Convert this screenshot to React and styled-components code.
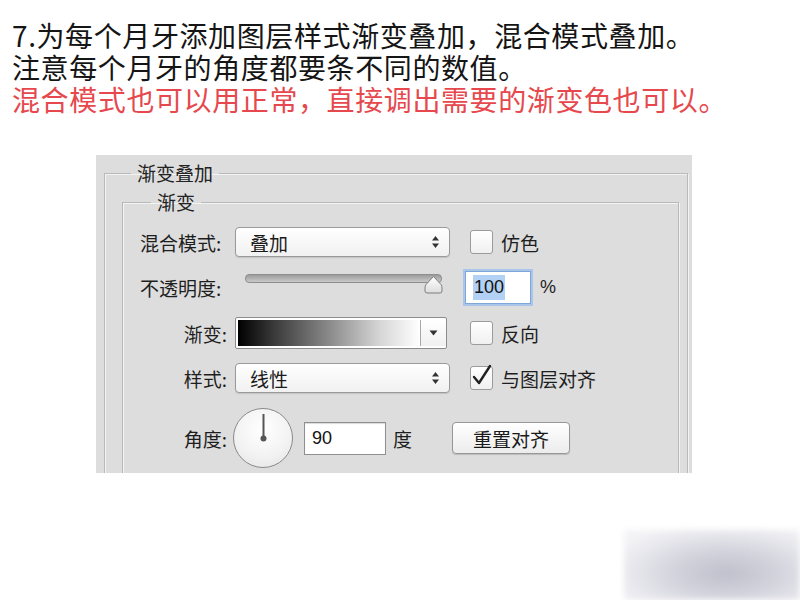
import React from "react";
import styled, { createGlobalStyle } from "styled-components";

const Global = createGlobalStyle`
  html, body { margin: 0; padding: 0; background: #fff; }
  body { width: 800px; height: 600px; overflow: hidden; position: relative;
    font-family: "Noto Sans CJK SC", "Noto Sans", sans-serif; }
`;

const Page = styled.div`
  width: 800px;
  height: 600px;
  position: relative;
  overflow: hidden;
`;

const Intro = styled.div`
  padding: 19px 0 0 12px;
`;

const Line = styled.div`
  font-family: "Noto Sans CJK SC", sans-serif;
  font-size: 28px;
  line-height: 32px;
  height: 32px;
  letter-spacing: 0.6px;
  white-space: nowrap;
  color: ${(p) => (p.$red ? "#e6484d" : "#151515")};
`;

const Panel = styled.div`
  margin: 40px 0 0 96px;
  width: 596px;
  height: 318px;
  background: #dddddd;
  overflow: hidden;
  box-sizing: border-box;
  padding: 5px 4px 0 8px;
`;

const Group = styled.fieldset`
  margin: ${(p) => (p.$inner ? "3px 0 0 0" : "0")};
  padding: ${(p) => (p.$inner ? "12px 0 40px 0" : "0 8px 40px 17px")};
  border: 1px solid #b9b9b9;
  box-shadow: inset 1px 1px 0 #f3f3f3, 1px 1px 0 #f3f3f3;
  min-width: 0;
`;

const Legend = styled.legend`
  margin-left: ${(p) => p.$offset}px;
  padding: 0 6px;
  font-size: 19px;
  line-height: 26px;
  color: #222;
`;

const Rows = styled.div`
  display: flex;
  flex-direction: column;
  gap: 13px;
`;

const Row = styled.div`
  display: flex;
  align-items: center;
  height: ${(p) => p.$h}px;
`;

const Label = styled.div`
  width: 104px;
  padding-right: 8px;
  box-sizing: content-box;
  text-align: right;
  font-size: 19px;
  color: #1e1e1e;
  white-space: nowrap;
`;

const LabelLeft = styled(Label)`
  text-align: left;
  padding-left: 17px;
  width: 87px;
`;

const Select = styled.div`
  width: 215px;
  height: 30px;
  box-sizing: border-box;
  border: 1px solid #9a9a9a;
  border-radius: 4px;
  background: linear-gradient(#ffffff, #f1f1f1);
  box-shadow: 0 1px 1px rgba(0,0,0,0.12);
  display: flex;
  align-items: center;
  justify-content: space-between;
  padding: 0 9px 0 14px;
  font-size: 19px;
  color: #1a1a1a;
`;

const Check = styled.div`
  width: 23px;
  height: 24px;
  box-sizing: border-box;
  border: 1px solid #9b9b9b;
  border-radius: 3px;
  background: linear-gradient(#ffffff, #f0f0f0);
  margin-left: ${(p) => p.$ml ?? 20}px;
  position: relative;
  flex: none;
`;

const CheckText = styled.span`
  margin-left: 8px;
  font-size: 19px;
  color: #1e1e1e;
  white-space: nowrap;
`;

const SliderBox = styled.div`
  width: 215px;
  height: 34px;
  position: relative;
  align-self: stretch;
`;

const Track = styled.div`
  position: absolute;
  left: 10px;
  right: 8px;
  top: 4px;
  height: 7px;
  border-radius: 4px;
  border: 1px solid #8e8e8e;
  background: linear-gradient(#9c9c9c, #c9c9c9);
`;

const Thumb = styled.svg`
  position: absolute;
  right: 7px;
  top: 5px;
`;

const Field = styled.div`
  width: ${(p) => p.$w}px;
  height: 33px;
  box-sizing: border-box;
  margin-left: ${(p) => p.$ml}px;
  border: 1px solid ${(p) => (p.$focus ? "#7ea6d8" : "#8f8f8f")};
  box-shadow: ${(p) => (p.$focus ? "0 0 0 2px #a9c6ea" : "inset 0 1px 1px rgba(0,0,0,0.15)")};
  background: #fff;
  display: flex;
  align-items: center;
  padding-left: 7px;
  font-family: "Liberation Sans", Arial, sans-serif;
  font-size: 18px;
  color: #111;
`;

const Selected = styled.span`
  background: #b3d1f4;
  padding: 2px 1px;
`;

const Unit = styled.span`
  margin-left: ${(p) => p.$ml}px;
  font-size: ${(p) => (p.$latin ? 18 : 19)}px;
  font-family: ${(p) => (p.$latin ? '"Liberation Sans", Arial, sans-serif' : '"Noto Sans CJK SC", sans-serif')};
  color: #1e1e1e;
`;

const GradientPick = styled.div`
  width: 212px;
  height: 32px;
  box-sizing: border-box;
  border: 1px solid #8c8c8c;
  border-radius: 2px;
  background: #fff;
  display: flex;
  padding: 2px 0 2px 2px;
`;

const GradientFill = styled.div`
  flex: 1;
  background: linear-gradient(to right, #000 0%, #3a3a3a 20%, #8a8a8a 50%, #d6d6d6 78%, #ffffff 100%);
`;

const GradientArrow = styled.div`
  width: 25px;
  border-left: 1px solid #a8a8a8;
  display: flex;
  align-items: center;
  justify-content: center;
  background: linear-gradient(#fff, #f0f0f0);
`;

const Dial = styled.div`
  width: 60px;
  height: 60px;
  box-sizing: border-box;
  border-radius: 50%;
  border: 1px solid #8a8a8a;
  background: radial-gradient(circle at 50% 35%, #ffffff 0%, #f3f3f3 55%, #e2e2e2 100%);
  position: relative;
  flex: none;
  margin-left: -2px;
`;

const DialSvg = styled.svg`
  position: absolute;
  left: 0;
  top: 0;
`;

const Button = styled.div`
  margin-left: 40px;
  width: 118px;
  height: 32px;
  box-sizing: border-box;
  border: 1px solid #979797;
  border-radius: 4px;
  background: linear-gradient(#ffffff, #ececec);
  box-shadow: 0 1px 1px rgba(0,0,0,0.15);
  display: flex;
  align-items: center;
  justify-content: center;
  font-size: 19px;
  color: #1a1a1a;
`;

const Smudge = styled.div`
  position: absolute;
  right: 0;
  bottom: 0;
  width: 176px;
  height: 70px;
  background: radial-gradient(ellipse 70% 75% at 58% 62%, #c0c0cc 0%, #d2d2dc 40%, #e6e6ec 75%, #f3f3f6 100%);
  filter: blur(3px);
`;

const Stepper = () => (
  <svg width="9" height="14" viewBox="0 0 9 14">
    <path d="M4.5 1 L8 5.5 H1 Z" fill="#333" />
    <path d="M4.5 13 L8 8.5 H1 Z" fill="#333" />
  </svg>
);

export default function App() {
  return (
    <Page>
      <Global />
      <Intro>
        <Line>7.为每个月牙添加图层样式渐变叠加，混合模式叠加。</Line>
        <Line>注意每个月牙的角度都要条不同的数值。</Line>
        <Line $red>混合模式也可以用正常，直接调出需要的渐变色也可以。</Line>
      </Intro>
      <Panel>
        <Group>
          <Legend $offset={9}>渐变叠加</Legend>
          <Group $inner>
            <Legend $offset={28}>渐变</Legend>
            <Rows>
              <Row $h={30}>
                <LabelLeft>混合模式:</LabelLeft>
                <Select>
                  <span>叠加</span>
                  <Stepper />
                </Select>
                <Check />
                <CheckText>仿色</CheckText>
              </Row>
              <Row $h={34}>
                <LabelLeft>不透明度:</LabelLeft>
                <SliderBox>
                  <Track />
                  <Thumb width="19" height="19" viewBox="0 0 19 19">
                    <defs>
                      <linearGradient id="tg" x1="0" y1="0" x2="0" y2="1">
                        <stop offset="0" stopColor="#ffffff" />
                        <stop offset="1" stopColor="#dcdcdc" />
                      </linearGradient>
                    </defs>
                    <path
                      d="M9.5 1.5 L17 9.5 Q18 11 18 13 V16 Q18 18 16 18 H3 Q1 18 1 16 V13 Q1 11 2 9.5 Z"
                      fill="url(#tg)"
                      stroke="#7f7f7f"
                      strokeWidth="1"
                    />
                  </Thumb>
                </SliderBox>
                <Field $w={66} $ml={15} $focus>
                  <Selected>100</Selected>
                </Field>
                <Unit $ml={9} $latin>%</Unit>
              </Row>
              <Row $h={32}>
                <Label>渐变:</Label>
                <GradientPick>
                  <GradientFill />
                  <GradientArrow>
                    <svg width="9" height="6" viewBox="0 0 9 6">
                      <path d="M0.5 0.5 H8.5 L4.5 5.5 Z" fill="#333" />
                    </svg>
                  </GradientArrow>
                </GradientPick>
                <Check $ml={23} />
                <CheckText>反向</CheckText>
              </Row>
              <Row $h={32}>
                <Label>样式:</Label>
                <Select>
                  <span>线性</span>
                  <Stepper />
                </Select>
                <Check>
                  <svg width="23" height="24" viewBox="0 0 23 24" style={{ position: "absolute", left: -1, top: -3 }}>
                    <path d="M4 13 L9 19 L20 2" fill="none" stroke="#222" strokeWidth="2.4" strokeLinecap="round" strokeLinejoin="round" />
                  </svg>
                </Check>
                <CheckText>与图层对齐</CheckText>
              </Row>
              <Row $h={62}>
                <Label>角度:</Label>
                <Dial>
                  <DialSvg width="60" height="60" viewBox="0 0 60 60">
                    <line x1="29.5" y1="29" x2="29.5" y2="5" stroke="#555" strokeWidth="2" />
                    <circle cx="29.5" cy="29.5" r="3" fill="#555" />
                  </DialSvg>
                </Dial>
                <Field $w={82} $ml={11}>90</Field>
                <Unit $ml={7}>度</Unit>
                <Button>重置对齐</Button>
              </Row>
            </Rows>
          </Group>
        </Group>
      </Panel>
      <Smudge />
    </Page>
  );
}
